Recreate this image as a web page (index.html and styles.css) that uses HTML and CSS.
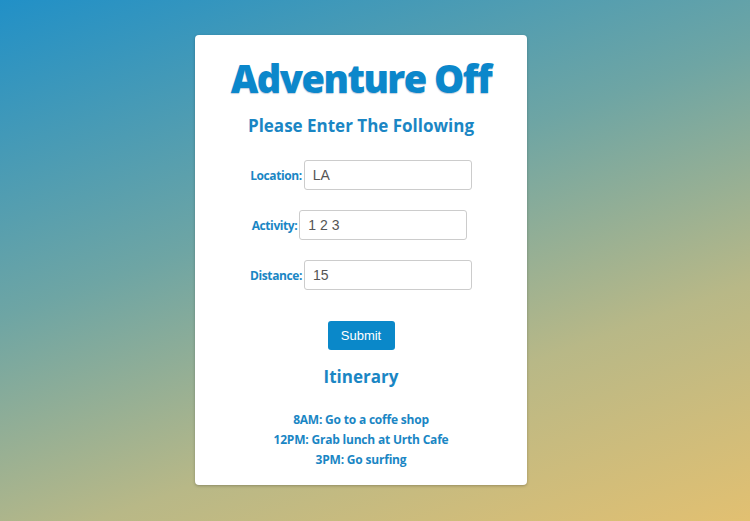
FILE: index.html
```html
<!DOCTYPE html>
<html>
<head>
<meta charset="utf-8">
<link rel="stylesheet" href="styles.css">
</head>
<body>
<div class="page">
  <div class="card">
    <h1 class="title">Adventure Off</h1>
    <h2 class="subtitle">Please Enter The Following</h2>
    <form class="form">
      <div class="row"><label class="label">Location:</label><input class="input" type="text" value="LA"></div>
      <div class="row row-activity"><label class="label">Activity:</label><input class="input" type="text" value="1 2 3"></div>
      <div class="row"><label class="label">Distance:</label><input class="input" type="text" value="15"></div>
      <button class="submit" type="button">Submit</button>
    </form>
    <h2 class="itinerary">Itinerary</h2>
    <ul class="items">
      <li>8AM: Go to a coffe shop</li>
      <li>12PM: Grab lunch at Urth Cafe</li>
      <li>3PM: Go surfing</li>
    </ul>
  </div>
</div>
</body>
</html>
```
FILE: styles.css
```css
html, body {
  margin: 0;
  padding: 0;
  height: 100%;
}
body {
  background: linear-gradient(160deg, #2190c7 0%, #6ea5a4 40%, #b8b887 70%, #e2c071 100%);
  font-family: "Open Sans", "Noto Sans", sans-serif;
  color: #1a86c4;
}
.page {
  display: flex;
  justify-content: center;
  padding-top: 35px;
  padding-right: 28px;
}
.card {
  width: 332px;
  height: 450px;
  box-sizing: border-box;
  background: #fff;
  border-radius: 4px;
  box-shadow: 0 1px 3px rgba(0,0,0,0.25);
  display: flex;
  flex-direction: column;
  align-items: center;
}
.title {
  margin: 20px 0 0;
  font-size: 38px;
  font-weight: 800;
  line-height: 46px;
  color: #0b87cb;
  letter-spacing: -1.5px;
  text-shadow: 0 1px 1px rgba(0,60,120,0.25);
}
.subtitle {
  margin: 13px 0 0;
  font-size: 17px;
  font-weight: 700;
  line-height: 24px;
}
.form {
  display: flex;
  flex-direction: column;
  align-items: center;
  margin-top: 22px;
}
.row {
  display: flex;
  align-items: center;
  gap: 2px;
  height: 30px;
  margin-bottom: 20px;
}
.row-activity {
  margin-left: -3px;
}
.label {
  font-size: 12px;
  font-weight: 700;
  letter-spacing: -0.4px;
}
.input {
  width: 168px;
  height: 30px;
  box-sizing: border-box;
  border: 1px solid #ccc;
  border-radius: 3px;
  padding: 0 8px;
  font-family: "Liberation Sans", Arial, sans-serif;
  font-size: 14px;
  color: #555;
  outline: none;
}
.submit {
  margin-top: 11px;
  width: 67px;
  height: 29px;
  border: none;
  border-radius: 3px;
  background: #0a88c9;
  color: #fff;
  font-family: "Liberation Sans", Arial, sans-serif;
  font-size: 13px;
}
.itinerary {
  margin: 15px 0 0;
  font-size: 17px;
  font-weight: 700;
  line-height: 24px;
}
.items {
  list-style: none;
  margin: 21px 0 0;
  padding: 0;
  text-align: center;
  font-size: 12px;
  font-weight: 700;
  line-height: 20px;
  letter-spacing: -0.2px;
}
```
